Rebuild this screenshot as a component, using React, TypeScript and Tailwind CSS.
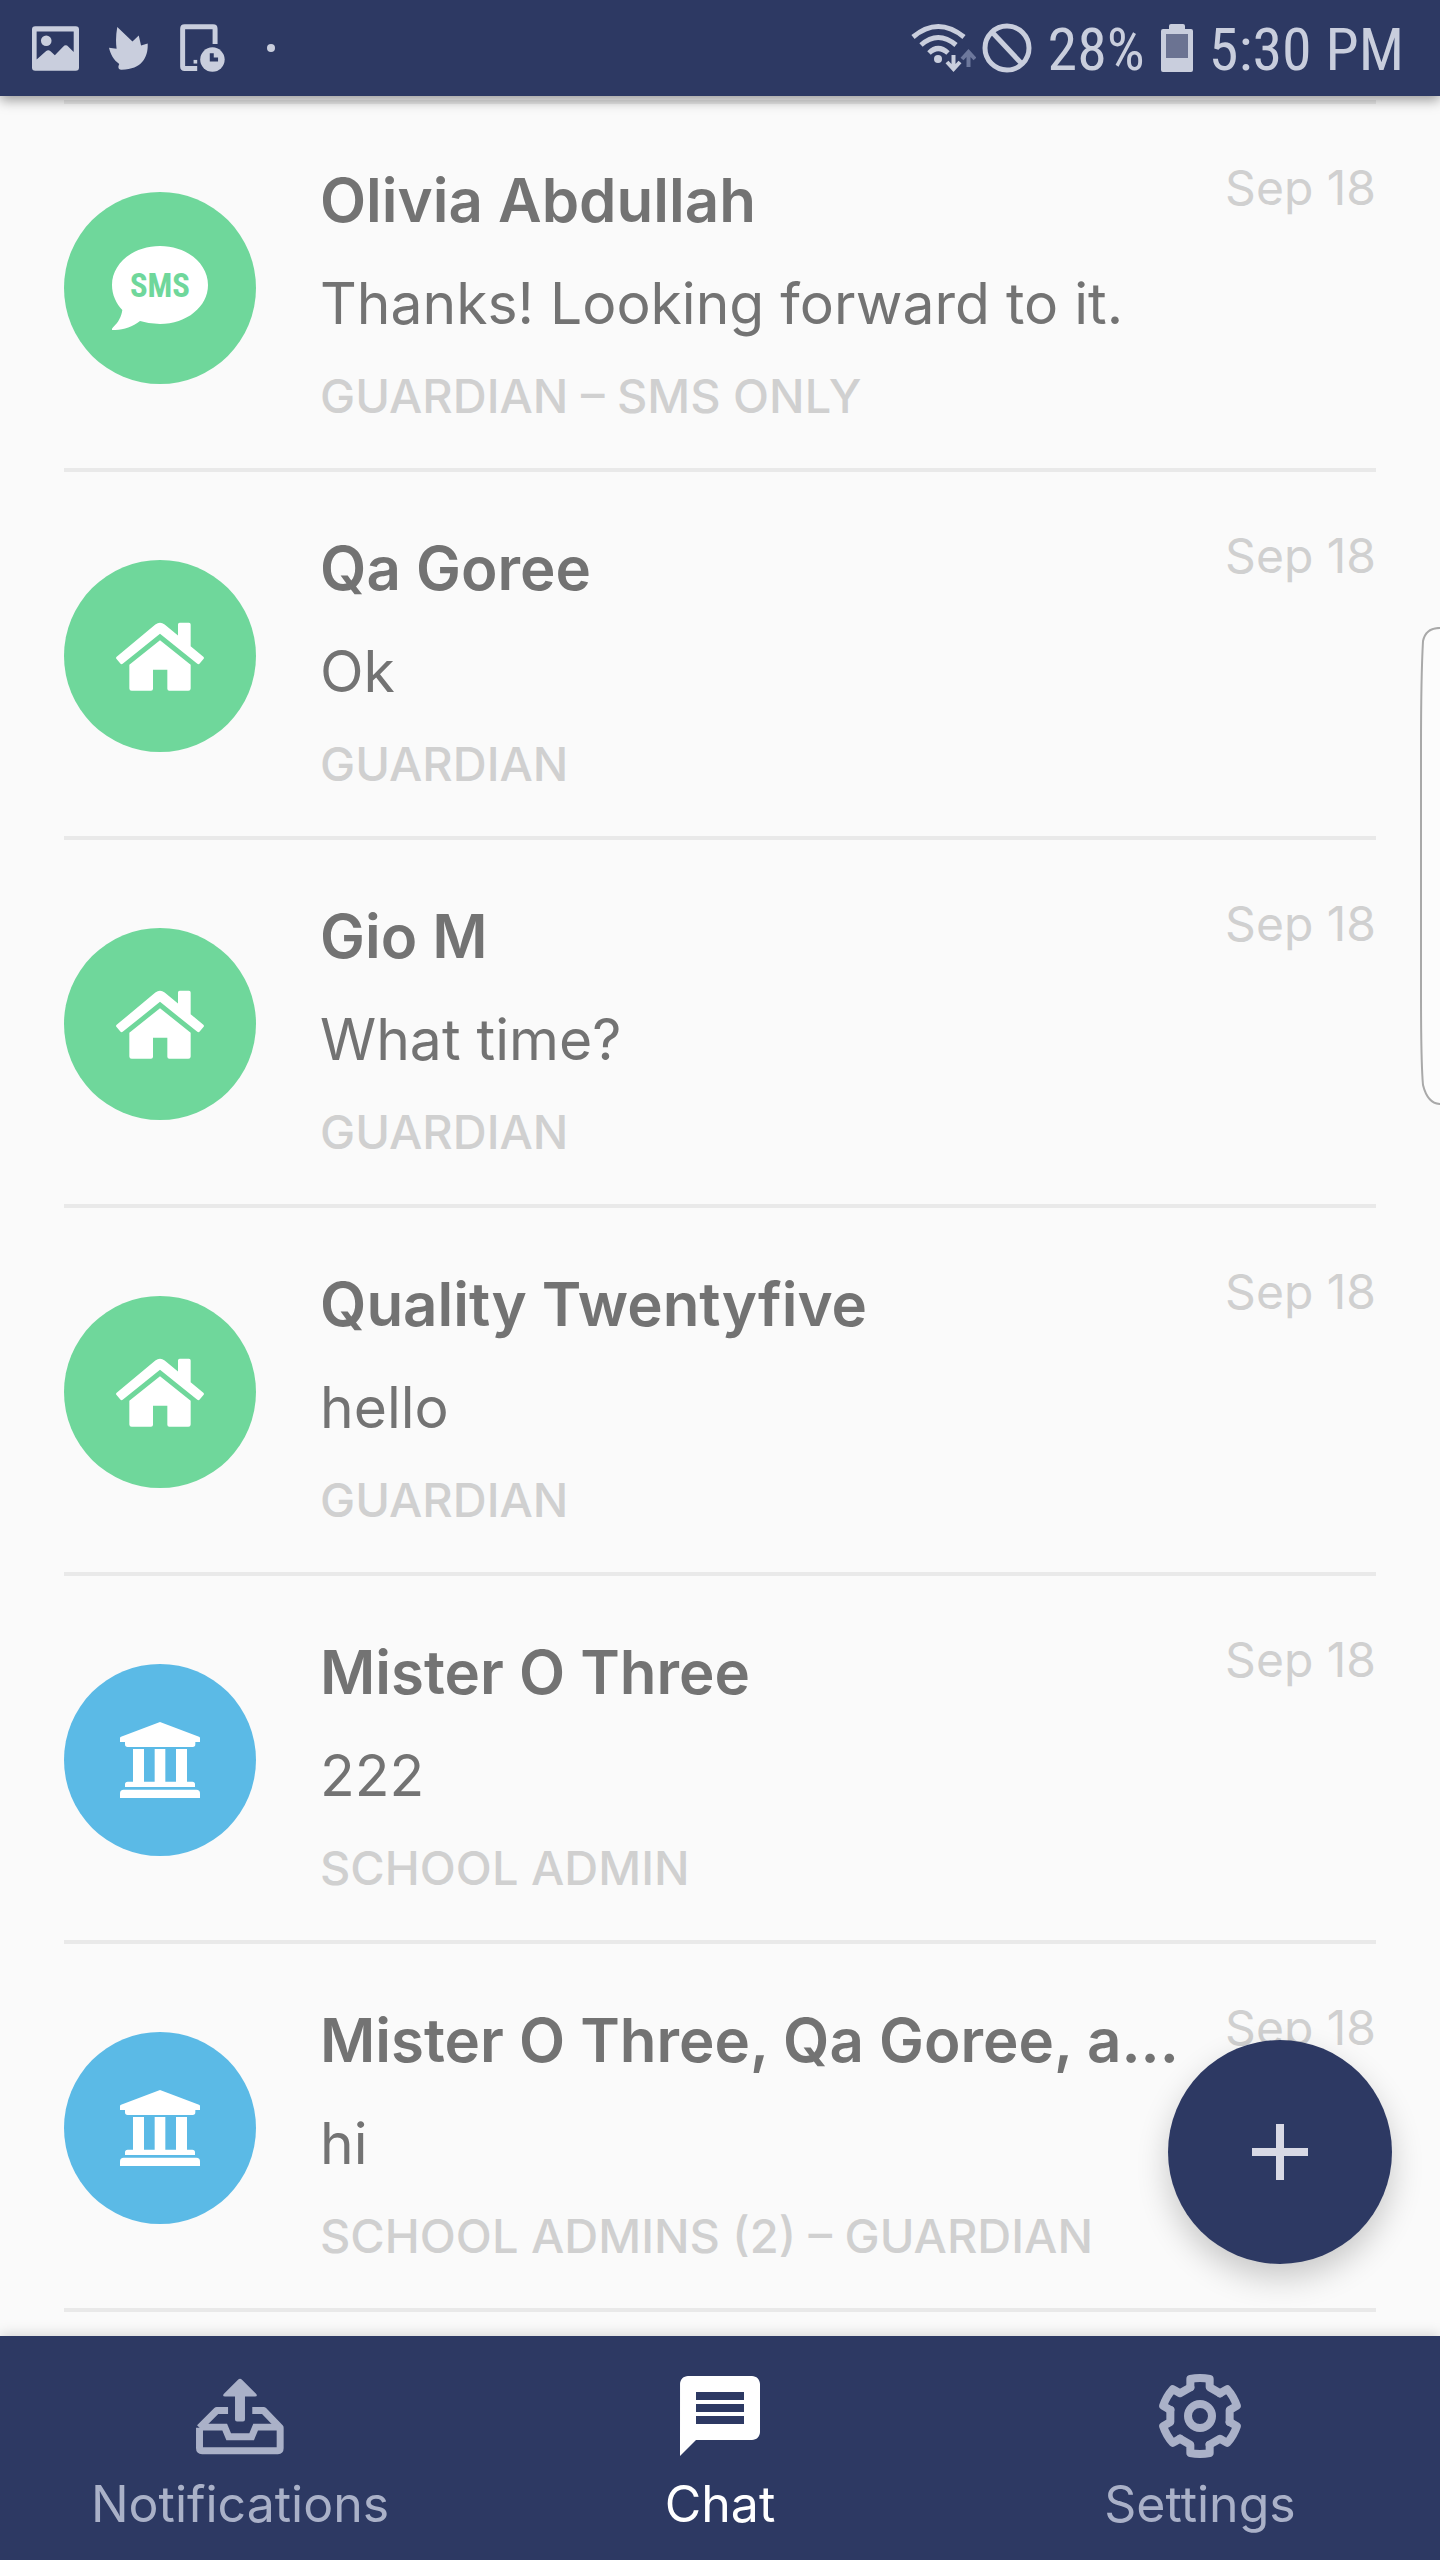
import React from "react";
import { MdMessage } from "react-icons/md";

function PictureIcon() {
  return (
    <svg viewBox="0 0 142 135" className="h-[45px] w-[47px]" fill="currentColor" aria-hidden="true">
      <path fillRule="evenodd" d="M10 0H132q10 0 10 10V125q0 10-10 10H10Q0 135 0 125V10Q0 0 10 0ZM14 16V101L42 76Q49 70 56 76L69 88L94 62Q102 54 110 62L126 78V16Z" />
      <circle cx="43" cy="44" r="16" />
    </svg>
  );
}

function LeafIcon() {
  return (
    <svg viewBox="0 0 118 130" className="h-[43px] w-[39px]" fill="currentColor" aria-hidden="true">
      <path d="M25 0L71 44L90 26L97 56L117 50C119 86 104 130 36 129Q26 128 29 117L31 112C14 100 4 82 0 63L23 66C20 45 21 22 25 0Z" />
    </svg>
  );
}

function DeviceClockIcon() {
  return (
    <svg viewBox="0 0 136 144" className="h-12 w-[45px]" aria-hidden="true">
      <path d="M106 60V14Q106 8 100 8H14Q8 8 8 14V128Q8 134 14 134H52" fill="none" stroke="currentColor" strokeWidth="15" />
      <rect x="41" y="108" width="11" height="11" fill="currentColor" />
      <circle cx="98" cy="107" r="37" fill="currentColor" />
      <path d="M96 88V107H115" fill="none" stroke="#2d3963" strokeWidth="12" />
    </svg>
  );
}

function WifiIcon() {
  return (
    <svg viewBox="0 0 66 50" className="h-[50px] w-[66px]" fill="none" stroke="currentColor" strokeWidth="5" aria-hidden="true">
      <path d="M3 14Q28 -7 54 14M11 22Q28 7 46 22M19 30Q28 21 38 30" />
      <circle cx="28" cy="36" r="4" fill="currentColor" stroke="none" />
      <path d="M43.500 32V45M37 39L43.500 46L50 39" strokeWidth="4" />
      <path d="M58.500 44V30M52 36L58.500 29L65 36" strokeWidth="4" stroke="#6d789c" />
    </svg>
  );
}

function BlockIcon() {
  return (
    <svg viewBox="0 0 50 50" className="size-[50px]" fill="none" stroke="currentColor" strokeWidth="5" aria-hidden="true">
      <circle cx="25" cy="25" r="22" />
      <path d="M10 9L40 41" />
    </svg>
  );
}

function BatteryIcon() {
  return (
    <svg viewBox="0 0 32 48" className="h-12 w-8" fill="currentColor" aria-hidden="true">
      <path d="M10 0H22q2 0 2 2V5H30q2 0 2 2V46q0 2-2 2H2q-2 0-2-2V7Q0 5 2 5H8V2Q8 0 10 0Z" />
      <rect x="5" y="10" width="22" height="24" fill="#6b7392" />
    </svg>
  );
}

function SmsIcon() {
  return (
    <svg viewBox="216 228 288 252" className="h-[84px] w-24" role="img" aria-label="SMS">
      <path fill="#fff" d="M360 228C440 228 504 280 504 345S440 462 360 462Q328 462 300 453C276 471 248 481 217 480C214 478 216 475 220 471C236 456 244 440 247 420C228 400 216 374 216 345C216 280 280 228 360 228Z" />
      <text x="360" y="380" textAnchor="middle" fill="#6fd79b" className="font-['Roboto_Condensed',sans-serif] text-[98px] font-bold">
        SMS
      </text>
    </svg>
  );
}

function HouseIcon() {
  return (
    <svg viewBox="228 274 264 206" className="h-[69px] w-[88px]" fill="#fff" aria-hidden="true">
      <path d="M248 399Q244 402 241 398L229 384Q227 381 230 378L346 281Q360 271 374 281L414 314V281Q414 276 419 276H447Q452 276 452 281V346L490 378Q493 381 491 384L479 398Q476 402 472 399L360 309Z" />
      <path d="M360 328L452 402V473q0 7-7 7H388q-6 0-6-6V417H339V474q0 6-6 6H275q-7 0-7-7V402Z" />
    </svg>
  );
}

function SchoolIcon() {
  return (
    <svg viewBox="240 246 240 228" className="h-[76px] w-20" fill="#fff" aria-hidden="true">
      <path d="M360 246L477 290Q480 291 480 294V306H466V313Q466 321 458 321H263Q255 321 255 313V306H240V294Q240 291 243 290Z" />
      <path d="M279 327H312V425H344V327H376V425H408V327H441V425H457Q465 425 465 433V441H255V433Q255 425 263 425H279Z" />
      <path d="M240 474V460Q240 449 251 449H469Q480 449 480 460V474Z" />
    </svg>
  );
}

function OutboxIcon() {
  return (
    <svg viewBox="348 172 264 232" className="h-[77px] w-[88px]" fill="none" stroke="currentColor" strokeWidth="21" aria-hidden="true">
      <path strokeLinejoin="round" d="M358 322V384Q358 391 366 391H594Q601 391 601 384V322L551 270H517" />
      <path strokeLinejoin="round" d="M358 322L410 270H444" />
      <path d="M360 320H434L446 349H515L527 320H600" />
      <path fill="currentColor" stroke="none" d="M474 177Q480 171 486 177L529 220Q534 228 525 228H495V297q0 6-6 6H471q-6 0-6-6V228H435Q426 228 431 220Z" />
    </svg>
  );
}

const TOOTH_ANGLES = [0, 60, 120, 180, 240, 300];

function GearIcon() {
  return (
    <svg viewBox="-126 -126 252 252" className="size-[84px]" fill="none" stroke="currentColor" strokeWidth="24" strokeLinejoin="round" strokeLinecap="round" aria-hidden="true">
      <circle r="36" />
      {TOOTH_ANGLES.map((angle) => (
        <path key={angle} transform={`rotate(${angle})`} d="M-29 -86V-111Q0 -117 29 -111V-86L60 -68" />
      ))}
    </svg>
  );
}

type Role = "sms" | "guardian" | "admin";

interface Conversation {
  name: string;
  message: string;
  label: string;
  date: string;
  role: Role;
}

const CONVERSATIONS: Conversation[] = [
  { name: "Olivia Abdullah", message: "Thanks! Looking forward to it.", label: "GUARDIAN – SMS ONLY", date: "Sep 18", role: "sms" },
  { name: "Qa Goree", message: "Ok", label: "GUARDIAN", date: "Sep 18", role: "guardian" },
  { name: "Gio M", message: "What time?", label: "GUARDIAN", date: "Sep 18", role: "guardian" },
  { name: "Quality Twentyfive", message: "hello", label: "GUARDIAN", date: "Sep 18", role: "guardian" },
  { name: "Mister O Three", message: "222", label: "SCHOOL ADMIN", date: "Sep 18", role: "admin" },
  { name: "Mister O Three, Qa Goree, a...", message: "hi", label: "SCHOOL ADMINS (2) – GUARDIAN", date: "Sep 18", role: "admin" },
];

const AVATAR_COLORS: Record<Role, string> = {
  sms: "bg-[#6fd79b]",
  guardian: "bg-[#6fd79b]",
  admin: "bg-[#5bbae6]",
};

function Avatar({ role }: { role: Role }) {
  return (
    <div className={`mt-8 flex size-48 shrink-0 items-center justify-center rounded-full ${AVATAR_COLORS[role]}`}>
      {role === "sms" && <SmsIcon />}
      {role === "guardian" && <HouseIcon />}
      {role === "admin" && <SchoolIcon />}
    </div>
  );
}

function StatusBar() {
  return (
    <header className="relative z-10 flex h-24 items-center justify-between bg-[#2d3963] pl-8 pr-9 text-[#c9cedd] shadow-[0_4px_12px_rgba(0,0,0,0.4)]">
      <div className="flex items-center">
        <PictureIcon />
        <span className="ml-[30px]"><LeafIcon /></span>
        <span className="ml-8"><DeviceClockIcon /></span>
        <span className="ml-[42px] size-2 rounded-full bg-current" />
      </div>
      <div className="flex items-center font-['Roboto_Condensed',sans-serif] text-[60px] leading-none">
        <WifiIcon />
        <span className="ml-1.5"><BlockIcon /></span>
        <span className="ml-4 pt-1">28%</span>
        <span className="ml-4"><BatteryIcon /></span>
        <span className="ml-4 pt-1">5:30 PM</span>
      </div>
    </header>
  );
}

function ConversationRow({ name, message, label, date, role }: Conversation) {
  return (
    <li className="border-b-4 border-[#e9e9e9]">
      <a href="#" className="flex gap-16 pb-11 pt-14">
        <Avatar role={role} />
        <div className="min-w-0 flex-1">
          <div className="flex items-start justify-between">
            <h2 className="min-w-0 truncate pt-1 text-[60px] font-semibold leading-[72px] text-[#737373]">{name}</h2>
            <time className="shrink-0 text-[48px] leading-[56px] text-[#d0d0d0]">{date}</time>
          </div>
          <p className="mt-8 truncate text-[57px] leading-[72px] text-[#737373]">{message}</p>
          <p className="mt-7 text-[47px] font-medium leading-[56px] text-[#d0d0d0]">{label}</p>
        </div>
      </a>
    </li>
  );
}

const TABS = [
  { name: "Notifications", icon: <OutboxIcon />, active: false },
  { name: "Chat", icon: <MdMessage className="size-24" aria-hidden="true" />, active: true },
  { name: "Settings", icon: <GearIcon />, active: false },
];

function TabBar() {
  return (
    <nav className="relative z-10 grid grid-cols-3 bg-[#2d3963] shadow-[0_-2px_12px_rgba(0,0,0,0.15)]">
      {TABS.map((tab) => (
        <button
          key={tab.name}
          type="button"
          aria-current={tab.active ? "page" : undefined}
          className={`flex flex-col items-center gap-3 pb-7 pt-8 ${tab.active ? "text-white" : "text-[#aab1c8]"}`}
        >
          <span className="flex h-24 items-center">{tab.icon}</span>
          <span className="text-[50px] leading-[56px]">{tab.name}</span>
        </button>
      ))}
    </nav>
  );
}

export default function App() {
  return (
    <div className="flex min-h-screen flex-col bg-[#fafafa] font-['Inter',sans-serif]">
      <StatusBar />
      <main className="relative flex-1 pb-6 pt-1">
        <ul className="mx-16 border-t-4 border-[#e9e9e9]">
          {CONVERSATIONS.map((conversation) => (
            <ConversationRow key={conversation.name} {...conversation} />
          ))}
        </ul>
        <svg viewBox="0 0 20 478" className="absolute right-0 top-[531px] h-[478px] w-5" fill="#fcfcfc" stroke="#a9a9a9" strokeWidth="2" aria-hidden="true">
          <path d="M22 1Q6 0 3 14Q1 50 1 120V366Q1 436 3 458Q8 478 22 477" />
        </svg>
        <button
          type="button"
          aria-label="New conversation"
          className="absolute bottom-[72px] right-12 flex size-56 items-center justify-center rounded-full bg-[#2d3963] shadow-[0_14px_32px_rgba(0,0,0,0.2)]"
        >
          <svg viewBox="0 0 56 56" className="size-14" stroke="#d8d9e5" strokeWidth="8" aria-hidden="true">
            <path d="M28 0V56M0 28H56" />
          </svg>
        </button>
      </main>
      <TabBar />
    </div>
  );
}
